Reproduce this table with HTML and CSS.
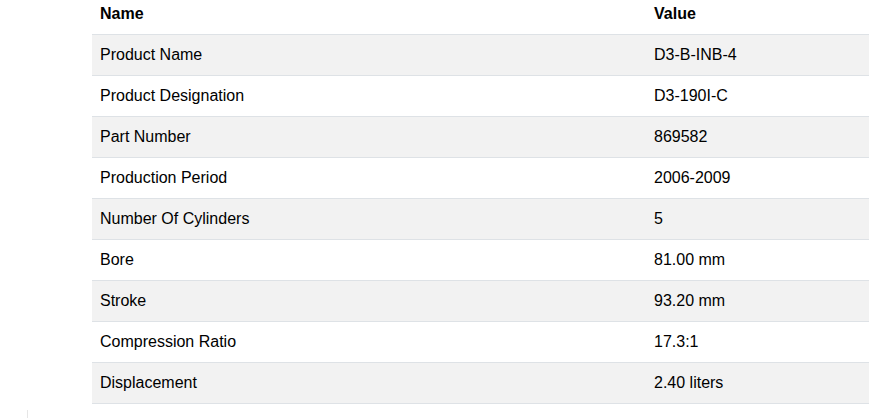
FILE: index.html
```html
<!DOCTYPE html>
<html lang="en">
<head>
<meta charset="utf-8">
<title>Specifications</title>
<link rel="stylesheet" href="styles.css">
</head>
<body>
<div class="page">
  <span class="edge-mark"></span>
  <table class="spec-table">
    <thead>
      <tr><th class="col-name">Name</th><th>Value</th></tr>
    </thead>
    <tbody>
      <tr><td>Product Name</td><td>D3-B-INB-4</td></tr>
      <tr><td>Product Designation</td><td>D3-190I-C</td></tr>
      <tr><td>Part Number</td><td>869582</td></tr>
      <tr><td>Production Period</td><td>2006-2009</td></tr>
      <tr><td>Number Of Cylinders</td><td>5</td></tr>
      <tr><td>Bore</td><td>81.00 mm</td></tr>
      <tr><td>Stroke</td><td>93.20 mm</td></tr>
      <tr><td>Compression Ratio</td><td>17.3:1</td></tr>
      <tr><td>Displacement</td><td>2.40 liters</td></tr>
    </tbody>
  </table>
</div>
</body>
</html>
```

FILE: styles.css
```css
html, body {
  margin: 0;
  padding: 0;
  background: #ffffff;
}

body {
  font-family: "Liberation Sans", Arial, sans-serif;
  font-size: 16px;
  color: #000000;
  overflow: hidden;
}

.page {
  position: relative;
  padding-left: 92px;
  height: 418px;
}

.spec-table {
  width: 777px;
  border-collapse: collapse;
  table-layout: fixed;
}

.spec-table th,
.spec-table td {
  text-align: left;
  padding: 8px 8px;
  line-height: 24px;
  border-bottom: 1px solid #dee2e6;
  vertical-align: top;
}

.spec-table th {
  font-weight: bold;
  color: #000;
  padding-top: 2px;
}

.spec-table .col-name {
  width: 538px;
}

.spec-table tbody tr:nth-child(odd) td {
  background: #f2f2f2;
}

.edge-mark {
  position: absolute;
  left: 27px;
  top: 410px;
  width: 1px;
  height: 8px;
  background: #e6e6e6;
}
```
